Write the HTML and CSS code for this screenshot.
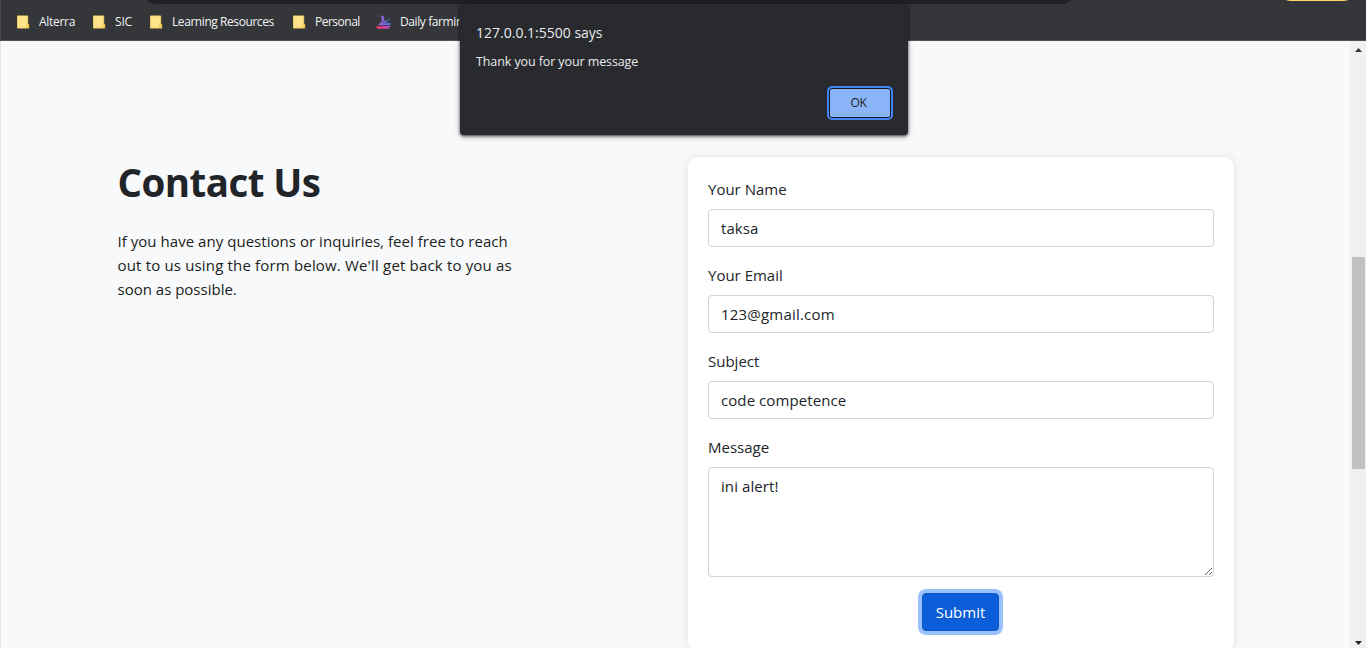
FILE: index.html
```html
<!DOCTYPE html>
<html lang="en">
<head>
<meta charset="utf-8">
<title>Contact Us</title>
<link rel="stylesheet" href="styles.css">
</head>
<body>
<div class="window">
  <header class="toolbar">
    <div class="address-edge"></div>
    <div class="update-edge"></div>
    <nav class="bookmarks">
      <a class="bookmark alterra"><svg class="folder" viewBox="0 0 14 16"><path d="M.5 1.500h11v9h1v4H.5z" fill="#ffe38d" stroke="#f5d565"/><path d="M10.500 14v-3.500h2v4z" fill="#ffe680" stroke="#e8bd35" stroke-width=".8"/></svg><span>Alterra</span></a>
      <a class="bookmark sic"><svg class="folder" viewBox="0 0 14 16"><path d="M.5 1.500h11v9h1v4H.5z" fill="#ffe38d" stroke="#f5d565"/><path d="M10.500 14v-3.500h2v4z" fill="#ffe680" stroke="#e8bd35" stroke-width=".8"/></svg><span>SIC</span></a>
      <a class="bookmark learning"><svg class="folder" viewBox="0 0 14 16"><path d="M.5 1.500h11v9h1v4H.5z" fill="#ffe38d" stroke="#f5d565"/><path d="M10.500 14v-3.500h2v4z" fill="#ffe680" stroke="#e8bd35" stroke-width=".8"/></svg><span>Learning Resources</span></a>
      <a class="bookmark personal"><svg class="folder" viewBox="0 0 14 16"><path d="M.5 1.500h11v9h1v4H.5z" fill="#ffe38d" stroke="#f5d565"/><path d="M10.500 14v-3.500h2v4z" fill="#ffe680" stroke="#e8bd35" stroke-width=".8"/></svg><span>Personal</span></a>
      <a class="bookmark daily"><svg class="ship" viewBox="0 0 16 16"><defs><linearGradient id="hull"><stop offset="0" stop-color="#ff2f5e"/><stop offset="1" stop-color="#b44fd0"/></linearGradient><linearGradient id="sail"><stop offset="0" stop-color="#b35be8"/><stop offset="1" stop-color="#3d83e8"/></linearGradient></defs><path d="M3.500 1.500L7.300 2 9 7.500 14 4l-3.500 5 4.500.300-1 1.700L2 11.200l3.800-3.700L5.500 3z" fill="url(#sail)"/><path d="M6.500 9.500L8.500 6M9 10l3-3.500" stroke="#35363a" stroke-width=".8"/><path d="M0 12.600l14.500-.8-1.700 3H1.500z" fill="url(#hull)"/></svg><span>Daily farming</span></a>
    </nav>
  </header>
  <div class="viewport">
    <main class="page">
      <section class="intro">
        <h1>Contact Us</h1>
        <p><span class="l1">If you have any questions or inquiries, feel free to reach</span><br><span class="l2">out to us using the form below. We'll get back to you as</span><br><span>soon as possible.</span></p>
      </section>
      <form class="card">
        <label for="name">Your Name</label>
        <input id="name" class="control" type="text" value="taksa">
        <label for="email">Your Email</label>
        <input id="email" class="control email" type="text" value="123@gmail.com">
        <label for="subject">Subject</label>
        <input id="subject" class="control" type="text" value="code competence">
        <label for="message">Message</label>
        <textarea id="message" class="control area">ini alert!</textarea>
        <button class="submit" type="button">Submit</button>
      </form>
    </main>
    <aside class="scrollbar">
      <svg class="arrow" viewBox="0 0 7 4"><path d="M0 4L3.500 0 7 4z" fill="#333"/></svg>
      <div class="thumb"></div>
      <svg class="arrow" viewBox="0 0 7 4"><path d="M0 0h7L3.500 4z" fill="#222"/></svg>
    </aside>
  </div>
  <div class="dialog" role="alertdialog">
    <div class="dialog-title">127.0.0.1:5500 says</div>
    <div class="dialog-text">Thank you for your message</div>
    <button class="ok" type="button">OK</button>
  </div>
</div>
</body>
</html>
```
FILE: styles.css
```css
* { box-sizing: border-box; }
body { margin: 0; overflow: hidden; font-family: "Open Sans", "Noto Sans", sans-serif; }
.window { position: relative; width: 1366px; height: 648px; overflow: hidden; display: flex; flex-direction: column; background: #f8f9fb; }
.toolbar { position: relative; flex: none; height: 41px; background: #35363a; border-bottom: 1px solid #505154; border-left: 1px solid #4b4c50; }
.address-edge { position: absolute; left: 140px; top: -28px; width: 936px; height: 32px; border-radius: 16px; background: #202124; }
.update-edge { position: absolute; left: 1276px; top: -27px; width: 80px; height: 28px; border-radius: 14px; background: #fdd663; }
.bookmarks { display: flex; height: 40px; padding: 3px 0 0 16px; color: #f1f3f4; font-size: 12px; white-space: nowrap; }
.bookmark { display: flex; align-items: center; gap: 9px; flex: none; }
.folder { width: 13px; height: 16px; flex: none; }
.ship { width: 16px; height: 16px; flex: none; }
.alterra { width: 76px; letter-spacing: -0.3px; }
.sic { width: 57px; letter-spacing: -0.2px; }
.learning { width: 143px; letter-spacing: -0.43px; }
.personal { width: 83px; letter-spacing: -0.5px; }
.daily { gap: 8px; letter-spacing: -0.4px; }
.viewport { flex: 1; display: flex; min-height: 0; border-left: 1px solid #e6e7e9; }
.page { flex: 1; display: flex; align-items: flex-start; padding: 116px 116px 0 116px; color: #212529; }
.intro { width: 571px; flex: none; padding-left: 0.5px; }
h1 { margin: 0; font-size: 38.5px; line-height: 48px; font-weight: 700; padding-top: 1px; letter-spacing: -0.55px; }
.intro p { margin: 23px 0 0; font-size: 15px; line-height: 24px; white-space: nowrap; color: #1a1d20; }
.l1 { letter-spacing: 0.04px; }
.l2 { letter-spacing: 0.17px; }
.card { width: 546px; height: 494px; flex: none; padding: 20px; border-radius: 10px; background: #fff; box-shadow: 0 0 10px rgba(0,0,0,.1); display: flex; flex-direction: column; }
label { height: 24px; font-size: 15px; line-height: 24px; margin-bottom: 8px; }
.control { display: block; width: 100%; height: 38px; flex: none; margin: 0 0 16px; padding: 6px 12px; border: 1px solid #ced4da; border-radius: 4px; background: #fff; color: #212529; font: 15px/24px "Open Sans", "Noto Sans", sans-serif; letter-spacing: 0.08px; outline: none; }
.email { letter-spacing: 0.2px; }
.area { height: 110px; resize: vertical; }
.submit { align-self: center; width: 77px; height: 38px; margin-right: 1px; border: 1px solid #0a58ca; border-radius: 4px; background: #0b5ed7; box-shadow: 0 0 0 4px #98c1fe; color: #fff; font: 15px/24px "Open Sans", "Noto Sans", sans-serif; padding: 0; }
.scrollbar { width: 16px; background: #f0f0f0; display: flex; flex-direction: column; align-items: center; padding: 7px 0 3px; }
.arrow { width: 7px; height: 4px; flex: none; }
.thumb { width: 13px; height: 212px; margin: 205px 0 auto 1px; background: #c1c1c1; }
.dialog { position: absolute; left: 460px; top: 4px; width: 448px; height: 131px; padding: 18px 16px 16px; border-radius: 4px; background: #292a2d; box-shadow: 0 1px 3px rgba(0,0,0,.7), 0 2px 6px rgba(0,0,0,.25); color: #e8eaed; display: flex; flex-direction: column; }
.dialog-title { font-size: 14px; line-height: 21px; }
.dialog-text { margin-top: 9px; font-size: 12.5px; line-height: 20px; letter-spacing: -0.1px; }
.ok { align-self: flex-end; width: 62px; height: 30px; margin: 16px 1px 0 0; padding: 0 3px 2px 0; border: 1px solid #15171c; border-radius: 3px; background: #8ab4f8; box-shadow: 0 0 0 2px #4285f4; color: #202124; font: 12px "Open Sans", sans-serif; letter-spacing: -0.3px; }
```
